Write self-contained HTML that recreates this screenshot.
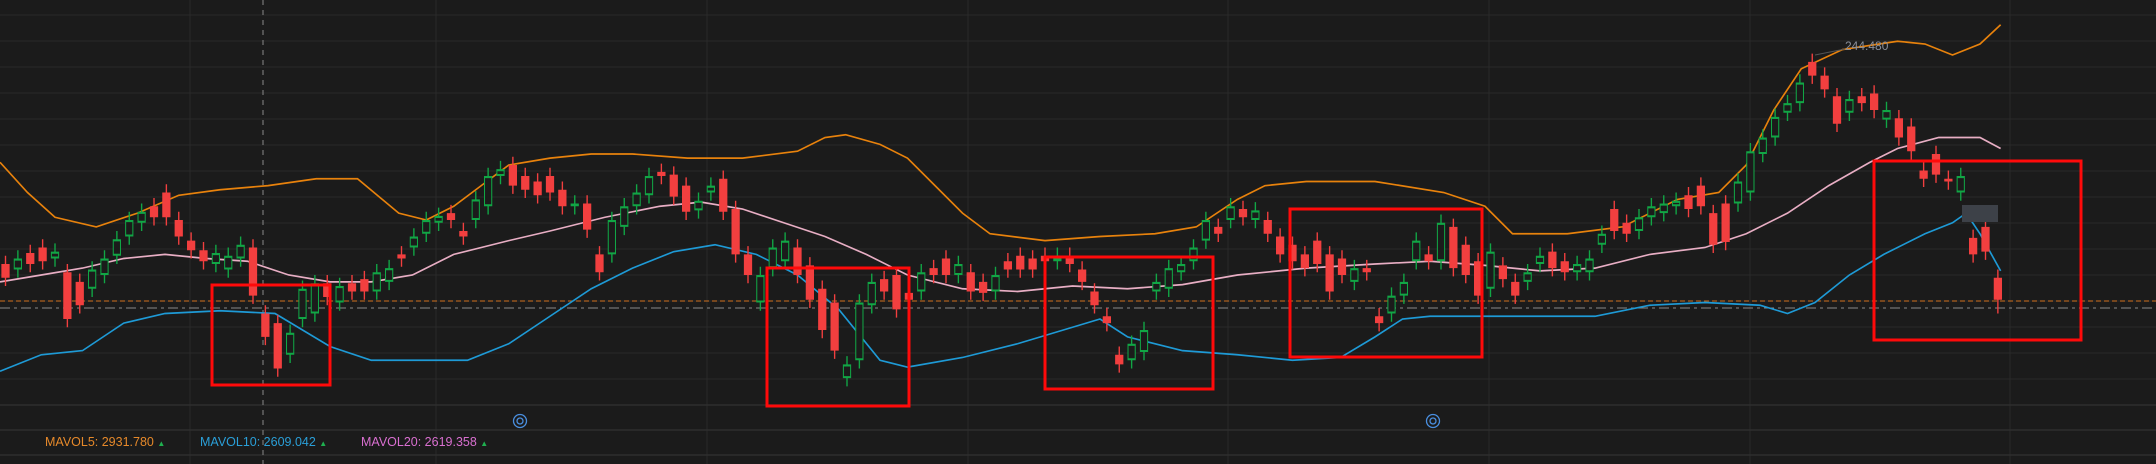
<!DOCTYPE html><html><head><meta charset="utf-8"><style>
html,body{margin:0;padding:0;background:#1b1b1b;width:2156px;height:464px;overflow:hidden}
svg{position:absolute;left:0;top:0}
.lg{position:absolute;top:435px;font:12.5px "Liberation Sans",sans-serif}
</style></head><body>
<svg width="2156" height="464" xmlns="http://www.w3.org/2000/svg">
<g stroke="#2a2a2a" stroke-width="1">
<path d="M0 15H2156M0 41H2156M0 67H2156M0 93H2156M0 119H2156M0 145H2156M0 171H2156M0 197H2156M0 223H2156M0 249H2156M0 275H2156M0 301H2156M0 327H2156M0 353H2156M0 379H2156"/>
<path d="M190 0V464M436 0V464M707 0V464M968 0V464M1228 0V464M1489 0V464M1750 0V464M2010 0V464"/>
</g>
<path d="M0 405H2156M0 430H2156M0 455H2156" stroke="#2e2e2e" stroke-width="1.5"/>
<line x1="263" x2="263" y1="0" y2="464" stroke="#888" stroke-dasharray="5,5"/>
<line x1="0" x2="2156" y1="301" y2="301" stroke="#d0721f" stroke-dasharray="5,3"/>
<line x1="0" x2="2156" y1="308" y2="308" stroke="#888" stroke-dasharray="10,4,3,4"/>
<g transform="scale(1.375)" fill="none">
<polyline stroke="#e8820c" stroke-width="1.2" points="0,118 20,140 40,158 70,165 100,155 130,142 160,138 195,135 230,130 260,130 290,155 310,160 330,150 350,135 370,120 400,115 430,112 460,112 500,115 540,115 580,110 600,100 615,98 640,105 660,115 680,135 700,155 720,170 760,175 800,172 840,170 870,165 900,145 920,135 950,132 1000,132 1050,140 1080,150 1100,170 1140,170 1180,165 1220,145 1250,140 1270,120 1290,80 1310,50 1340,36 1380,30 1400,32 1420,40 1440,32 1455,18"/>
<polyline stroke="#e8aec4" stroke-width="1.2" points="0,205 30,200 60,195 90,188 120,185 150,188 180,190 210,200 240,205 270,205 300,200 330,185 370,175 400,168 440,158 480,150 510,147 540,152 570,162 600,172 630,185 660,200 700,210 740,212 780,208 820,210 860,207 900,200 950,195 1000,192 1040,190 1080,193 1120,197 1160,195 1200,185 1240,180 1270,170 1300,155 1330,135 1360,118 1380,108 1410,100 1440,100 1455,108"/>
<polyline stroke="#1e9ad6" stroke-width="1.2" points="0,270 30,258 60,255 90,235 120,228 160,226 200,228 240,252 270,262 300,262 340,262 370,250 400,230 430,210 460,195 490,183 520,178 550,185 580,200 610,225 640,262 660,267 700,260 740,250 780,238 800,232 820,245 860,255 900,258 940,262 975,260 1000,245 1020,232 1040,230 1080,230 1120,230 1160,230 1200,222 1240,220 1280,222 1300,228 1320,220 1345,200 1370,185 1400,170 1420,162 1430,155 1440,170 1455,197"/>
<!-- red wicks -->
<path stroke="#f23f3f" stroke-width="1" d="M4 186V208M22 178V198M31 174V196M49 192V238M58 199V228M112 144V164M121 134V164M130 154V178M139 169V188M148 176V196M184 174V221M193 222V251M202 229V274M238 200V222M256 200V218M265 197V218M292 179V194M328 149V166M337 162V178M373 114V141M382 122V144M391 126V148M400 122V146M409 132V156M427 142V173M436 179V204M481 119V134M490 121V149M499 129V160M526 124V160M535 146V191M544 179V206M580 174V206M589 187V224M598 204V246M607 214V261M643 197V218M652 194V231M661 207V224M679 189V206M688 182V206M706 192V218M715 199V219M733 184V202M742 180V202M751 182V202M760 180V196M778 180V198M787 190V211M796 206V228M805 224V241M814 252V271M886 159V176M904 146V164M922 154V176M931 166V191M940 172V196M949 179V201M958 169V198M967 179V218M976 182V206M994 189V204M1003 224V241M1039 179V196M1057 159V201M1066 172V206M1075 184V221M1093 187V209M1102 199V221M1129 177V201M1138 184V204M1174 146V174M1183 156V176M1228 136V158M1237 129V156M1246 149V184M1255 142V182M1318 39V61M1327 49V71M1336 64V96M1354 64V81M1363 62V86M1381 80V106M1390 86V116M1399 118V136M1408 106V133M1417 124V138M1435 167V191M1444 159V189M1453 196V228"/>
<!-- red bodies -->
<path stroke="#f23f3f" stroke-width="6" d="M4 192V202M22 184V192M31 180V190M49 198V232M58 205V222M112 150V158M121 140V158M130 160V172M139 175V182M148 182V190M184 180V215M193 228V245M202 235V268M238 206V216M256 206V212M265 203V212M292 185V188M328 155V160M337 168V172M373 120V135M382 128V138M391 132V142M400 128V140M409 138V150M427 148V167M436 185V198M481 125V128M490 127V143M499 135V154M526 130V154M535 152V185M544 185V200M580 180V200M589 193V218M598 210V240M607 220V255M643 203V212M652 200V225M661 213V218M679 195V200M688 188V200M706 198V212M715 205V213M733 190V196M742 186V196M751 188V196M760 186V190M778 186V192M787 196V205M796 212V222M805 230V235M814 258V265M886 165V170M904 152V158M922 160V170M931 172V185M940 178V190M949 185V195M958 175V192M967 185V212M976 188V200M994 195V198M1003 230V235M1039 185V190M1057 165V195M1066 178V200M1075 190V215M1093 193V203M1102 205V215M1129 183V195M1138 190V198M1174 152V168M1183 162V170M1228 142V152M1237 135V150M1246 155V178M1255 148V176M1318 45V55M1327 55V65M1336 70V90M1354 70V75M1363 68V80M1381 86V100M1390 92V110M1399 124V130M1408 112V127M1417 130V132M1435 173V185M1444 165V183M1453 202V218"/>
<!-- green wicks -->
<path stroke="#11a645" stroke-width="1" d="M13 182V202M40 177V194M67 190V216M76 182V206M85 168V192M94 154V178M103 148V168M157 178V198M166 180V202M175 172V194M211 236V264M220 204V238M229 200V234M247 202V226M274 192V218M283 189V211M301 166V186M310 154V176M319 151V168M346 139V166M355 122V156M364 117V134M418 142V156M445 154V191M454 144V171M463 134V156M472 122V148M508 140V159M517 129V146M553 194V226M562 174V201M571 169V196M616 259V281M625 214V268M634 199V228M670 192V218M697 186V206M724 194V218M769 180V196M823 244V268M832 234V262M841 199V218M850 189V216M859 186V204M868 174V196M877 154V181M895 144V166M913 147V166M985 189V211M1012 209V234M1021 199V221M1030 169V196M1048 156V196M1084 177V216M1111 192V211M1120 180V198M1147 186V204M1156 182V204M1165 164V184M1192 152V174M1201 144V164M1210 142V161M1219 140V156M1264 126V154M1273 104V146M1282 94V118M1291 79V106M1300 69V88M1309 54V81M1345 66V88M1372 74V93M1426 122V146"/>
<!-- green bodies (hollow) -->
<g stroke-width="6"><path id="gb" stroke="#11a645" d="M13 188V196M40 183V188M67 196V210M76 188V200M85 174V186M94 160V172M103 154V162M157 184V192M166 186V196M175 178V188M211 242V258M220 210V232M229 206V228M247 208V220M274 198V212M283 195V205M301 172V180M310 160V170M319 157V162M346 145V160M355 128V150M364 123V128M418 148V150M445 160V185M454 150V165M463 140V150M472 128V142M508 146V153M517 135V140M553 200V220M562 180V195M571 175V190M616 265V275M625 220V262M634 205V222M670 198V212M697 192V200M724 200V212M769 186V190M823 250V262M832 240V256M841 205V212M850 195V210M859 192V198M868 180V190M877 160V175M895 150V160M913 153V160M985 195V205M1012 215V228M1021 205V215M1030 175V190M1048 162V190M1084 183V210M1111 198V205M1120 186V192M1147 192V198M1156 188V198M1165 170V178M1192 158V168M1201 150V158M1210 148V155M1219 146V150M1264 132V148M1273 110V140M1282 100V112M1291 85V100M1300 75V82M1309 60V75M1345 72V82M1372 80V87M1426 128V140"/></g>
<path stroke="#1b1b1b" stroke-width="4.5" d="M13 189.5V194.5M40 184.5V186.5M67 197.5V208.5M76 189.5V198.5M85 175.5V184.5M94 161.5V170.5M103 155.5V160.5M157 185.5V190.5M166 187.5V194.5M175 179.5V186.5M211 243.5V256.5M220 211.5V230.5M229 207.5V226.5M247 209.5V218.5M274 199.5V210.5M283 196.5V203.5M301 173.5V178.5M310 161.5V168.5M319 158.5V160.5M346 146.5V158.5M355 129.5V148.5M364 124.5V126.5M445 161.5V183.5M454 151.5V163.5M463 141.5V148.5M472 129.5V140.5M508 147.5V151.5M517 136.5V138.5M553 201.5V218.5M562 181.5V193.5M571 176.5V188.5M616 266.5V273.5M625 221.5V260.5M634 206.5V220.5M670 199.5V210.5M697 193.5V198.5M724 201.5V210.5M823 251.5V260.5M832 241.5V254.5M841 206.5V210.5M850 196.5V208.5M859 193.5V196.5M868 181.5V188.5M877 161.5V173.5M895 151.5V158.5M913 154.5V158.5M985 196.5V203.5M1012 216.5V226.5M1021 206.5V213.5M1030 176.5V188.5M1048 163.5V188.5M1084 184.5V208.5M1111 199.5V203.5M1120 187.5V190.5M1147 193.5V196.5M1156 189.5V196.5M1165 171.5V176.5M1192 159.5V166.5M1201 151.5V156.5M1210 149.5V153.5M1219 147.5V148.5M1264 133.5V146.5M1273 111.5V138.5M1282 101.5V110.5M1291 86.5V98.5M1300 76.5V80.5M1309 61.5V73.5M1345 73.5V80.5M1372 81.5V85.5M1426 129.5V138.5"/>
</g>
<g fill="none" stroke="#ff0a0a" stroke-width="3">
<rect x="212" y="285" width="118" height="100"/>
<rect x="767" y="268" width="142" height="138"/>
<rect x="1045" y="257" width="168" height="132"/>
<rect x="1290" y="209" width="192" height="148"/>
<rect x="1874" y="161" width="207" height="179"/>
</g>
<rect x="1962" y="205" width="36" height="17" fill="#3d4148"/>
<line x1="1815" y1="55" x2="1845" y2="49" stroke="#555"/>
<text x="1845" y="50" fill="#8a8f9a" font-family="Liberation Sans" font-size="12">244.480</text>
<g fill="none" stroke="#4a8fe0" stroke-width="1.3">
<circle cx="520" cy="421" r="6.5"/><circle cx="520" cy="421" r="3"/>
<circle cx="1433" cy="421" r="6.5"/><circle cx="1433" cy="421" r="3"/>
</g>
</svg>
<div class="lg" style="left:45px;color:#e6892a">MAVOL5: 2931.780 <span style="color:#1fb04f;font-size:8px">▲</span></div>
<div class="lg" style="left:200px;color:#2a9fd8">MAVOL10: 2609.042 <span style="color:#1fb04f;font-size:8px">▲</span></div>
<div class="lg" style="left:361px;color:#d96fd0">MAVOL20: 2619.358 <span style="color:#1fb04f;font-size:8px">▲</span></div>
</body></html>
